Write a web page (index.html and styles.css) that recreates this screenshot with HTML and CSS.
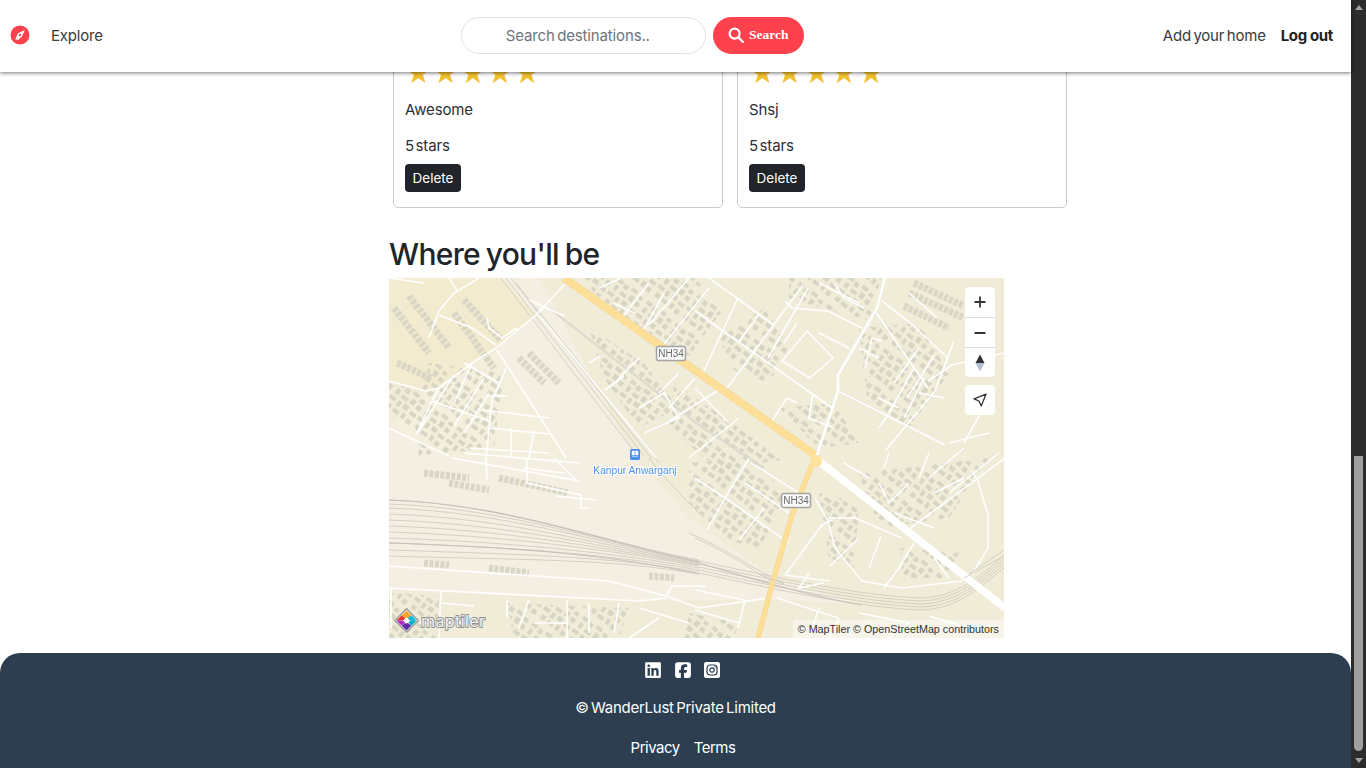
FILE: index.html
```html
<!DOCTYPE html>
<html lang="en">
<head>
  <meta charset="UTF-8" />
  <meta name="viewport" content="width=device-width, initial-scale=1.0"/>
  <title>WanderLust</title>
  <link rel="stylesheet" href="styles.css">
</head>
<body>
  <div class="page">
    <nav class="navbar">
      <a class="brand" href="#">
        <svg viewBox="0 0 20 20" width="20" height="20">
          <circle cx="10" cy="10" r="9.5" fill="#fe424d"/>
          <path d="M14.8 5.2 L12 11.6 L8.4 15 L5.2 14.8 L8 8.4 Z" fill="#fff" transform="translate(0 -0.2)"/>
          <circle cx="10" cy="10" r="1.2" fill="#fe424d"/>
        </svg>
      </a>
      <a class="nav-link explore" href="#">Explore</a>
      <form class="search">
        <input class="search-input" type="text" placeholder="Search destinations.." />
        <button class="search-btn" type="button">
          <svg viewBox="0 0 16 16" width="16" height="16" fill="none" stroke="#fff" stroke-width="2.2">
            <circle cx="6.6" cy="6.6" r="5"/>
            <path d="M10.4 10.4 L15 15" stroke-linecap="round"/>
          </svg>
          Search
        </button>
      </form>
      <div class="nav-right">
        <a class="nav-link" href="#">Add your home</a>
        <a class="nav-link logout" href="#">Log out</a>
      </div>
    </nav>

    <main class="content">
      <div class="reviews">
        <div class="review-card">
          <div class="stars">★★★★★</div>
          <p class="review-text">Awesome</p>
          <p class="review-rating">5 stars</p>
          <button class="delete-btn">Delete</button>
        </div>
        <div class="review-card">
          <div class="stars">★★★★★</div>
          <p class="review-text">Shsj</p>
          <p class="review-rating">5 stars</p>
          <button class="delete-btn">Delete</button>
        </div>
      </div>

      <h3 class="map-title">Where you'll be</h3>

      <div class="map">
        <svg class="map-canvas" viewBox="0 0 615 360" width="615" height="360">
          <defs>
            <pattern id="town" width="36" height="36" patternUnits="userSpaceOnUse" patternTransform="rotate(38)">
              <path class="town-tile" d="M2 2h6v4h-6zM10 3h5v5h-5zM18 1h7v4h-7zM28 3h5v4h-5zM3 9h4v6h-4zM11 11h7v4h-7zM21 8h5v6h-5zM29 10h5v5h-5zM1 18h7v4h-7zM11 18h4v6h-4zM18 17h6v5h-6zM27 19h7v4h-7zM4 26h5v5h-5zM12 27h7v4h-7zM22 25h4v6h-4zM29 27h5v5h-5z"/>
            </pattern>
          </defs>
          <rect width="615" height="360" fill="#f0ecd7"/>
          <!-- land areas -->
          <path d="M112 0H150L243 175L300 240L385 300L470 326L400 322L356 322L250 323L0 312V150L60 175L110 72Z" fill="#f5efe3"/>
          <path d="M0 150L40 110L108 72L180 180L60 180Z" fill="#f4efdd"/>
          <path d="M0 0H112L147 37L107 70L83 85L50 110L37 113L0 103Z" fill="#f3ebcf"/>

          <!-- built-up patches -->
          <g class="town">
            <path d="M195 0H305L335 30L300 78L262 60L205 15Z"/>
            <path d="M285 105L350 150L392 182L330 192L280 150Z"/>
            <path d="M300 185L360 180L397 215L370 272L340 262L300 225Z"/>
            <path d="M400 0H492L480 42L440 32L400 20Z"/>
            <path d="M470 50L530 45L560 95L520 150L478 120Z"/>
            <path d="M330 60L375 30L400 70L380 105L345 92Z"/>
            <path d="M390 130L445 125L470 165L430 170Z"/>
            <path d="M40 85L115 95L105 170L30 178L25 140Z"/>
            <path d="M0 105L40 115L25 150L0 140Z"/>
            <path d="M0 315L50 318V360H0Z"/>
            <path d="M118 325L240 330L230 360H125Z"/>
            <path d="M300 335L350 345L345 360H295Z"/>
            <path d="M470 195L600 180L560 240L490 250Z"/>
            <path d="M430 215L470 225L465 290L440 280Z"/>
            <path d="M510 270L570 275L560 300L515 300Z"/>
            <path d="M200 50L255 85L290 130L250 150L215 100Z"/>
          </g>

          <!-- warehouses and long rows -->
          <g class="blocks">
            <path d="M5 30L40 75M20 18L60 70M65 35L105 90M75 22L112 62M8 85L42 100"/>
            <path d="M130 80L155 105M140 75L160 95M160 95L170 105"/>
            <path d="M515 28L560 50M520 15L575 40M525 5L575 28"/>
            <path d="M110 200L180 215M35 195L80 200M60 205L100 212M35 285L60 287M100 290L140 295M260 298L285 300"/>
          </g>

          <!-- rail lines -->
          <g class="rail">
            <path d="M112 0L250 180M117 0L255 178M122 0L262 180M127 5L270 185M260 180C275 200 290 215 315 240"/>
            <path d="M0 222C120 226 220 266 310 282M0 226C120 230 220 267 310 283M0 230C120 234 220 268 310 284M0 236C120 240 220 269 310 285M0 242C120 246 220 270 310 286M0 248C120 252 220 271 310 287M0 254C120 258 220 272 310 288M0 260C120 264 220 274 310 290M0 265C120 269 220 276 310 292M0 272C120 276 220 278 310 294M0 278C120 282 220 280 310 296"/>
            <path d="M310 283C380 298 470 318 533 320C570 318 590 298 615 278M310 286C380 301 470 321 533 323C570 321 590 301 615 281M310 289C380 304 470 324 533 326C570 324 590 304 615 284M310 292C380 307 470 327 533 329C570 327 590 307 615 287M310 295C380 310 470 330 533 332C570 330 590 310 615 290"/>
            <path d="M306 260C340 275 360 290 383 303M300 255C340 272 365 292 395 305"/>
          </g>
          <path class="rail-dark" d="M0 222C120 226 220 266 310 284M0 265C120 269 220 276 310 296M310 285C360 300 420 318 473 327"/>
          <path class="rail-soft" d="M160 30L310 147L375 190"/>

          <!-- streets -->
          <g class="street">
            <path d="M177 5L147 37L107 70L83 85L50 110L37 113L0 103"/>
            <path d="M90 0L65 15L50 33L40 60M60 0L68 13M50 37L83 50L107 67M98 40L100 50L113 60L128 50"/>
            <path d="M108 72L177 180M150 37L267 180M140 22L175 38M200 85L211 78M216 112L235 98"/>
            <path d="M0 150L60 178M27 157L43 123L50 110M43 123L100 143M65 97L27 157M75 85L110 105M83 85L65 125M95 100L65 148M100 115L75 155"/>
            <path d="M97 180L103 123L117 90M93 132L160 140M100 118L118 118M98 150L160 156M122 150V180M145 152L140 180M80 170L160 175M75 175L190 185"/>
            <path d="M210 10L232 0M225 25L245 35M233 40L260 5M253 55L275 15M260 47L300 0M272 70L320 10M230 100L250 80M270 115L290 95M250 130L275 115L290 140L255 155"/>
            <path d="M306 33L443 130M320 0L385 47M349 65L369 37M313 97L349 20M336 113L414 7M379 80L419 10"/>
            <path d="M396 23L403 30L439 33L473 50M418 53L444 80L421 100L393 83L418 53M430 55L460 70M408 45L395 65"/>
            <path d="M486 33L539 110M493 23L519 43L559 80M539 103L563 87L615 75M496 173L546 113L565 63M449 113L556 167"/>
            <path d="M476 90L483 60L493 63M470 70L490 80M500 135L525 90M515 140L535 100M530 115L555 120M383 143L398 120L408 125M424 115L420 140L445 150M306 110L340 145"/>
            <path d="M306 100L280 130M280 143L330 112M300 180L350 140M520 15L548 40M490 150L500 135M560 165L600 155M600 120L575 165"/>
            <path d="M505 105L530 70M518 120L545 78M490 120L510 130M445 5L455 20L475 30M430 5L470 25"/>
            <path d="M426 220L439 243L446 270L473 303L513 310L573 303M439 240L466 240L513 260M396 297L416 270L433 247L443 242"/>
            <path d="M519 252L616 180M599 237L589 203L583 193M599 237V270L583 297M441 288L470 260M480 290L492 258M510 290L525 265M495 310L510 290"/>
            <path d="M336 220L360 180M318 252L336 220L306 200M336 220L400 265M356 205L400 235M362 185L410 215M350 262L375 230"/>
            <path d="M396 297L440 303M420 295L410 310L435 305M540 200L575 170M560 215L610 175M495 190L500 175M530 200L540 175"/>
            <path d="M455 185L480 200M490 205L500 225L520 205M545 215L575 200M505 235L545 250M545 280L560 300"/>
            <path d="M0 288L220 303L277 318L310 330L380 320M277 318L283 308L316 308M0 310L250 323L277 320"/>
            <path d="M52 312L50 360M2 310V350M52 325L85 328M118 322L118 340M140 322L130 350M178 322V360M200 325V355M145 345L178 345M230 325L225 355M250 330L300 345M270 340L240 360"/>
            <path d="M97 180L98 202M138 180V205L192 217V230L200 230M63 180L190 203M167 218L207 222M165 180L190 205"/>
            <path d="M306 312L356 322L349 350M306 332L350 345M388 320L449 340M430 330L420 360M450 340L440 360M470 335L520 345L500 360M540 338L580 350M30 345H90"/>
            <path d="M0 0L35 5M135 190L175 195"/>
          </g>

          <!-- main roads -->
          <path class="road-edge" d="M175 0L426 177"/>
          <path class="road-yellow" d="M175 0L426 177"/>
          <path class="road-edge thin" d="M423 187L403 237L384 303L369 360"/>
          <path class="road-yellow thin" d="M423 187L403 237L384 303L369 360"/>
          <path class="road-white" d="M426 180L616 330"/>
          <path class="street wide" d="M496 0L488 30L449 97L449 113L428 177"/>
          <circle cx="427" cy="183" r="6" fill="#fde29c"/>

          <!-- rail over road at the crossing -->
          <path class="rail" d="M370 296L395 306M580 296L615 272M575 300L615 278"/>

          <!-- shields -->
          <g class="shield">
            <rect x="267.5" y="68.5" width="29" height="14" rx="2"/>
            <text x="282" y="79">NH34</text>
            <rect x="392.5" y="215.5" width="29" height="14" rx="2"/>
            <text x="407" y="226">NH34</text>
          </g>

          <!-- station -->
          <rect x="241" y="171" width="10" height="11" rx="1.5" fill="#4a90f0"/>
          <path d="M243 173h2.4v4h-2.4zM246.6 173h2.4v4h-2.4zM243 178.5h6" fill="#fff" stroke="#fff" stroke-width=".5"/>
          <text class="station" x="246" y="195.5">Kanpur Anwarganj</text>
        </svg>

        <div class="map-controls">
          <div class="ctrl-group">
            <button class="ctrl-btn">
              <svg viewBox="0 0 16 16" width="16" height="16"><path d="M8 2.5V13.5M2.5 8H13.5" stroke="#333" stroke-width="1.8" fill="none"/></svg>
            </button>
            <button class="ctrl-btn">
              <svg viewBox="0 0 16 16" width="16" height="16"><path d="M2.5 8H13.5" stroke="#333" stroke-width="1.8" fill="none"/></svg>
            </button>
            <button class="ctrl-btn">
              <svg viewBox="0 0 16 20" width="16" height="20">
                <path d="M8 1.5L12.5 10H3.5Z" fill="#333"/>
                <path d="M8 18.5L12.5 10H3.5Z" fill="#b4bed2"/>
              </svg>
            </button>
          </div>
          <div class="ctrl-group">
            <button class="ctrl-btn">
              <svg viewBox="0 0 16 16" width="16" height="16"><path d="M14 2.2L2 6.8L7 9L9.2 14Z" fill="none" stroke="#333" stroke-width="1.3" stroke-linejoin="round"/></svg>
            </button>
          </div>
        </div>

        <div class="map-logo">
          <svg viewBox="0 0 26 26" width="25" height="25">
            <path d="M13 .8L25.2 13L13 25.2L.8 13Z" fill="#fff" stroke="#999" stroke-width="1.4" stroke-linejoin="round"/>
            <path d="M13 2.5L8 7.5L13 12L18 7.5Z" fill="#f9a825"/>
            <path d="M18 7.5L13 12L17 13L23.5 13Z" fill="#00b8d4"/>
            <path d="M8 7.5L2.5 13L8.5 13L13 12Z" fill="#e53935"/>
            <path d="M2.5 13L8 18.5L12 14.5L8.5 13Z" fill="#ab2bc4"/>
            <path d="M8 18.5L13 23.5L18 18.5L13 14.5Z" fill="#5e2ca5"/>
            <path d="M23.5 13L18 18.5L15 15L17 13Z" fill="#00acc1"/>
            <path d="M13 9.5L16.5 13L13 16.5L9.5 13Z" fill="#fff"/>
          </svg>
          <span class="map-logo-text">maptiler</span>
        </div>

        <div class="map-attrib">© MapTiler © OpenStreetMap contributors</div>
      </div>
    </main>

    <footer class="footer">
      <div class="socials">
        <svg viewBox="0 0 448 512" width="16" height="18"><path d="M416 32H31.9C14.3 32 0 46.5 0 64.3v383.4C0 465.5 14.3 480 31.9 480H416c17.6 0 32-14.5 32-32.3V64.3c0-17.8-14.4-32.3-32-32.3zM135.4 416H69V202.2h66.5V416zm-33.2-243c-21.3 0-38.5-17.3-38.5-38.5S80.9 96 102.2 96c21.2 0 38.5 17.3 38.5 38.5 0 21.3-17.2 38.5-38.5 38.5zm282.1 243h-66.4V312c0-24.8-.5-56.7-34.5-56.7-34.6 0-39.9 27-39.9 54.9V416h-66.4V202.2h63.7v29.2h.9c8.9-16.8 30.6-34.5 62.9-34.5 67.2 0 79.7 44.3 79.7 101.9V416z" fill="#fff"/></svg>
        <svg viewBox="0 0 448 512" width="16" height="18"><path d="M64 32C28.7 32 0 60.7 0 96V416c0 35.3 28.7 64 64 64h98.2V334.2H109.4V256h52.8V222.3c0-87.1 39.4-127.5 125-127.5c16.2 0 44.2 3.2 55.7 6.4V172c-6-.6-16.5-1-29.6-1c-42 0-58.2 15.9-58.2 57.2V256h83.6l-14.4 78.2H255V480H384c35.3 0 64-28.7 64-64V96c0-35.3-28.7-64-64-64H64z" fill="#fff"/></svg>
        <svg viewBox="0 0 16 16" width="16" height="16">
          <rect width="16" height="16" rx="2" fill="#fff"/>
          <rect x="3" y="3" width="10" height="10" rx="3" fill="none" stroke="#2c3e50" stroke-width="1.2"/>
          <circle cx="8" cy="8" r="2.2" fill="none" stroke="#2c3e50" stroke-width="1.2"/>
          <circle cx="11" cy="5" r=".7" fill="#2c3e50"/>
        </svg>
      </div>
      <div class="copyright">© WanderLust Private Limited</div>
      <div class="footer-links">
        <a href="#">Privacy</a>
        <a href="#">Terms</a>
      </div>
    </footer>
  </div>

  <aside class="scrollbar">
    <span class="arrow-up"></span>
    <div class="track"><div class="thumb"></div></div>
    <span class="arrow-down"></span>
  </aside>
</body>
</html>
```
FILE: styles.css
```css
:root {
  --brand: #fe424d;
  --text: #222;
  --footer: #2c3e50;
}

html, body {
  height: 100%;
}

body {
  margin: 0;
  display: flex;
  overflow: hidden;
  background: #fff;
  color: var(--text);
  font-family: Inter, "Noto Sans", sans-serif;
  word-spacing: -1.5px;
}

a {
  color: inherit;
  text-decoration: none;
}

.page {
  flex: 1;
  min-width: 0;
  height: 100vh;
  display: flex;
  flex-direction: column;
}

/* navbar */
.navbar {
  height: 72px;
  flex: none;
  position: relative;
  z-index: 5;
  display: flex;
  align-items: center;
  padding: 0 18px 2px 10px;
  background: #fff;
  box-shadow: 0 1px 4px rgba(0, 0, 0, 0.55);
  box-sizing: border-box;
}

.brand {
  display: flex;
}

.nav-link {
  font-size: 15px;
  letter-spacing: -0.2px;
  color: #3a3a3a;
}

.explore {
  margin-left: 21px;
}

.search {
  display: flex;
  gap: 7px;
  margin-left: 358px;
}

.search-input {
  width: 245px;
  height: 37px;
  box-sizing: border-box;
  padding: 0 12px 0 44px;
  border: 1px solid #dee2e6;
  border-radius: 25px;
  font-family: inherit;
  font-size: 15px;
  letter-spacing: -0.15px;
  word-spacing: -1.5px;
  outline: none;
}

.search-input::placeholder {
  color: #6c757d;
  opacity: 1;
}

.search-btn {
  width: 91px;
  height: 37px;
  display: flex;
  align-items: center;
  justify-content: center;
  gap: 5px;
  border: none;
  border-radius: 25px;
  background: var(--brand);
  color: #fff;
  font-family: "Liberation Serif", serif;
  font-weight: 700;
  font-size: 13.5px;
}

.nav-right {
  margin-left: auto;
  display: flex;
  gap: 15px;
}

.logout {
  font-weight: 700;
  color: #222;
  word-spacing: 0;
  letter-spacing: -0.35px;
}

/* content */
.content {
  flex: 1;
  min-height: 0;
  padding-left: 389px;
}

.reviews {
  display: flex;
  gap: 14px;
  margin: -40px 0 0 4px;
}

.review-card {
  width: 330px;
  height: 176px;
  box-sizing: border-box;
  padding: 0 11px;
  border: 1px solid #c9ccd0;
  border-radius: 5px;
}

.stars {
  margin-top: 20px;
  height: 44px;
  font-family: "DejaVu Sans", sans-serif;
  font-size: 30px;
  line-height: 40px;
  letter-spacing: 0.3px;
  color: #f4c12e;
}

.review-text,
.review-rating {
  margin: 0;
  font-size: 15px;
  line-height: 24px;
  letter-spacing: -0.15px;
  color: #2a2f36;
}

.review-text {
  margin-top: 1px;
}

.review-rating {
  margin-top: 12px;
  word-spacing: -2.5px;
}

.delete-btn {
  display: block;
  width: 56px;
  height: 28px;
  margin-top: 6px;
  padding: 0;
  border: none;
  border-radius: 4px;
  background: #212529;
  color: #fff;
  font-family: inherit;
  font-size: 13.5px;
}

.map-title {
  margin: 28px 0 5px;
  font-size: 30px;
  line-height: 37px;
  font-weight: 500;
  letter-spacing: -0.7px;
  color: #212529;
}

/* map */
.map {
  position: relative;
  width: 615px;
  height: 360px;
  overflow: hidden;
}

.map-canvas {
  display: block;
  filter: blur(0.35px);
}

.town path {
  fill: url(#town);
}

.town-tile {
  fill: #d9d5c4;
}

.blocks path {
  fill: none;
  stroke: #dad6c5;
  stroke-width: 7;
  stroke-dasharray: 4 1.5;
}

.rail path,
path.rail {
  fill: none;
  stroke: #d0ccc0;
  stroke-width: 0.9;
}

.rail-dark {
  fill: none;
  stroke: #c4c1b8;
  stroke-width: 1.2;
}

.rail-soft {
  fill: none;
  stroke: #dcdacf;
  stroke-width: 2.2;
}

.street path,
path.street {
  fill: none;
  stroke: #fff;
  stroke-width: 1.6;
}

path.street.wide {
  stroke-width: 2.6;
}

.road-edge {
  fill: none;
  stroke: #f7d99a;
  stroke-width: 8;
}

.road-yellow {
  fill: none;
  stroke: #fddf97;
  stroke-width: 6.5;
}

.road-edge.thin {
  stroke-width: 5.5;
}

.road-yellow.thin {
  stroke-width: 4;
}

.road-white {
  fill: none;
  stroke: #fff;
  stroke-width: 7.5;
}

.shield rect {
  fill: #f8f8f6;
  stroke: #a5a5a5;
  stroke-width: 1.5;
}

.shield text {
  font-family: "Liberation Sans", sans-serif;
  font-size: 10px;
  fill: #6e6e6e;
  text-anchor: middle;
  word-spacing: 0;
}

.station {
  font-family: "Liberation Sans", sans-serif;
  font-size: 10.2px;
  fill: #4a90f0;
  stroke: #fff;
  stroke-width: 2px;
  paint-order: stroke;
  text-anchor: middle;
  word-spacing: 0;
}

.map-controls {
  position: absolute;
  top: 9px;
  right: 9px;
  display: flex;
  flex-direction: column;
  gap: 8px;
}

.ctrl-group {
  display: flex;
  flex-direction: column;
  width: 30px;
  border-radius: 4px;
  background: #fff;
  overflow: hidden;
}

.ctrl-btn {
  width: 30px;
  height: 30px;
  padding: 0;
  display: flex;
  align-items: center;
  justify-content: center;
  border: none;
  background: none;
}

.ctrl-btn + .ctrl-btn {
  border-top: 1px solid #ddd;
}

.map-logo {
  position: absolute;
  left: 5px;
  bottom: 5px;
  display: flex;
  align-items: center;
  gap: 2px;
}

.map-logo svg {
  display: block;
}

.map-logo-text {
  font-family: Inter, sans-serif;
  font-size: 16px;
  font-weight: 400;
  letter-spacing: 0.4px;
  color: #f4f4f2;
  -webkit-text-stroke: 1.8px #8f8f8f;
  paint-order: stroke fill;
  word-spacing: 0;
}

.map-attrib {
  position: absolute;
  right: 0;
  bottom: 0;
  padding: 0 5px;
  height: 18px;
  line-height: 18px;
  background: rgba(255, 255, 255, 0.45);
  font-family: "Liberation Sans", sans-serif;
  font-size: 10.76px;
  color: #333;
  word-spacing: 0;
}

/* footer */
.footer {
  flex: none;
  height: 115px;
  margin-top: auto;
  box-sizing: border-box;
  padding-top: 8px;
  border-radius: 20px 20px 0 0;
  background: var(--footer);
  color: #fff;
  text-align: center;
}

.socials {
  display: flex;
  justify-content: center;
  align-items: center;
  gap: 13.5px;
  height: 18px;
  padding-left: 14px;
}

.copyright {
  margin-top: 17px;
  font-size: 15px;
  line-height: 24px;
  letter-spacing: -0.27px;
}

.footer-links {
  display: flex;
  justify-content: center;
  gap: 14px;
  margin-top: 16px;
  padding-left: 15px;
  font-size: 15px;
  line-height: 24px;
  letter-spacing: -0.5px;
}

/* scrollbar */
.scrollbar {
  flex: none;
  width: 15px;
  height: 100vh;
  display: flex;
  flex-direction: column;
  align-items: center;
  background: #2c2c2c;
}

.arrow-up,
.arrow-down {
  flex: none;
  width: 0;
  height: 0;
  margin: 5px 0;
  border-left: 4.5px solid transparent;
  border-right: 4.5px solid transparent;
}

.arrow-up {
  border-bottom: 5px solid #a3a3a3;
}

.arrow-down {
  border-top: 5px solid #a3a3a3;
}

.track {
  flex: 1;
  width: 100%;
  display: flex;
  justify-content: center;
  padding-top: 441px;
  padding-bottom: 2px;
  box-sizing: border-box;
  min-height: 0;
}

.thumb {
  width: 9px;
  border-radius: 0 0 5px 5px;
  background: #9f9f9f;
}
```
